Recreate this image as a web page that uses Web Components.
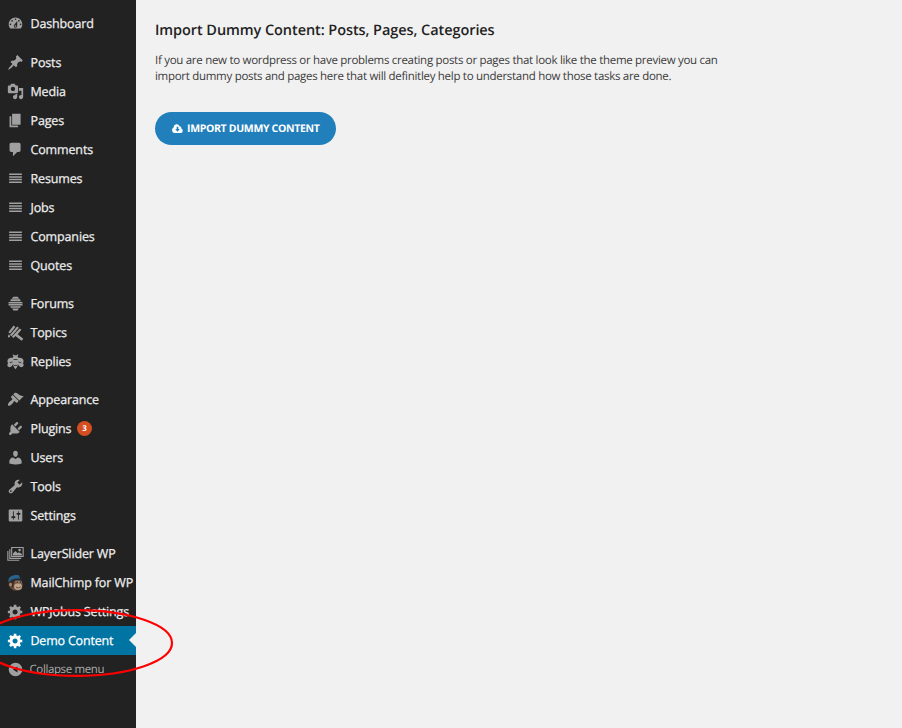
<!DOCTYPE html>
<html lang="en">
<head>
<meta charset="utf-8">
<title>Demo Content</title>
<style>
html,body{margin:0;height:100%}
body{background:#f1f1f1;font-family:"Open Sans","Noto Sans",sans-serif;overflow:hidden;text-rendering:geometricPrecision}
</style>
</head>
<body>
<admin-page>
  <admin-menu slot="menu">
    <menu-group class="first">
      <menu-item icon="dashboard">Dashboard</menu-item>
    </menu-group>
    <menu-group>
      <menu-item icon="post">Posts</menu-item>
      <menu-item icon="media">Media</menu-item>
      <menu-item icon="page">Pages</menu-item>
      <menu-item icon="comments">Comments</menu-item>
      <menu-item icon="lines">Resumes</menu-item>
      <menu-item icon="lines">Jobs</menu-item>
      <menu-item icon="lines">Companies</menu-item>
      <menu-item icon="lines">Quotes</menu-item>
    </menu-group>
    <menu-group>
      <menu-item icon="forums">Forums</menu-item>
      <menu-item icon="topics">Topics</menu-item>
      <menu-item icon="replies">Replies</menu-item>
    </menu-group>
    <menu-group>
      <menu-item icon="appearance">Appearance</menu-item>
      <menu-item icon="plugins">Plugins<count-badge slot="badge">3</count-badge></menu-item>
      <menu-item icon="users">Users</menu-item>
      <menu-item icon="tools">Tools</menu-item>
      <menu-item icon="settings">Settings</menu-item>
    </menu-group>
    <menu-group>
      <menu-item icon="slider">LayerSlider WP</menu-item>
      <menu-item icon="chimp">MailChimp for WP</menu-item>
      <menu-item icon="gear">WPJobus Settings</menu-item>
      <menu-item icon="gear" active>Demo Content</menu-item>
      <menu-item icon="collapse" quiet>Collapse menu</menu-item>
    </menu-group>
  </admin-menu>
  <import-panel>
    <span slot="title">Import Dummy Content: Posts, Pages, Categories</span>
    <span slot="line1">If you are new to wordpress or have problems creating posts or pages that look like the theme preview you can</span>
    <span slot="line2">import dummy posts and pages here that will definitley help to understand how those tasks are done.</span>
    <pill-button>IMPORT DUMMY CONTENT</pill-button>
  </import-panel>
  <ring-mark slot="overlay"></ring-mark>
</admin-page>
<script>
const p = d => `<path fill-rule="evenodd" d="${d}"/>`;
const ICONS = {
dashboard:p("M3.76 16h12.48c1.1-1.37 1.76-3.11 1.76-5 0-4.42-3.58-8-8-8s-8 3.58-8 8c0 1.89.66 3.63 1.76 5zM10 4c.55 0 1 .45 1 1s-.45 1-1 1-1-.45-1-1 .45-1 1-1zM6 6c.55 0 1 .45 1 1s-.45 1-1 1-1-.45-1-1 .45-1 1-1zm8 0c.55 0 1 .45 1 1s-.45 1-1 1-1-.45-1-1 .45-1 1-1zm-5.37 5.55L12 7v6c0 1.1-.9 2-2 2s-2-.9-2-2c0-.57.24-1.08.63-1.45zM4 10c.55 0 1 .45 1 1s-.45 1-1 1-1-.45-1-1 .45-1 1-1zm12 0c.55 0 1 .45 1 1s-.45 1-1 1-1-.45-1-1 .45-1 1-1zm-5 3c0-.55-.45-1-1-1s-1 .45-1 1 .45 1 1 1 1-.45 1-1z"),
post:p("M10.44 3.02l1.82-1.82 6.36 6.35-1.83 1.82c-1.05-.68-2.48-.57-3.41.36l-.75.75c-.92.93-1.04 2.35-.35 3.41l-1.83 1.82-2.41-2.41-2.8 2.79c-.42.42-3.38 2.71-3.8 2.29s1.86-3.39 2.28-3.81l2.79-2.79L4.1 9.36l1.83-1.82c1.05.69 2.48.57 3.4-.36l.75-.75c.93-.92 1.05-2.35.36-3.41z"),
media:p("M13 11V4c0-.55-.45-1-1-1h-1.67L9 1H5L3.67 3H2c-.55 0-1 .45-1 1v7c0 .55.45 1 1 1h10c.55 0 1-.45 1-1zM7 4.5c1.38 0 2.5 1.12 2.5 2.5S8.38 9.5 7 9.5 4.5 8.38 4.5 7 5.62 4.5 7 4.5zM14 6h5v10.5c0 1.38-1.12 2.5-2.5 2.5S14 17.88 14 16.5s1.12-2.5 2.5-2.5c.17 0 .34.02.5.05V9h-3V6zm-4 8.05V13h2v3.5c0 1.38-1.12 2.5-2.5 2.5S7 17.88 7 16.5 8.12 14 9.5 14c.17 0 .34.02.5.05z"),
page:p("M6 15V2h10v13H6zm-1 1h8v2H3V5h2v11z"),
comments:p("M5 2h9c1.1 0 2 .9 2 2v7c0 1.1-.9 2-2 2h-2l-5 5v-5H5c-1.1 0-2-.9-2-2V4c0-1.1.9-2 2-2z"),
lines:p("M2.500 4.200h15v1.700H2.500zM2.500 7.300h15v1.700H2.500zM2.500 10.400h15v1.700H2.500zM2.500 13.500h15v1.700H2.500z"),
forums:p("M7.500 2.200h5l2 2.1h-9zM4.600 5.100h10.800l.8 2.200H3.800zM1.800 8.200h16.400v1.700H1.800zM1.800 10.700h16.400v1.700H1.800zM3.800 13.200h12.400l-.8 1.900H4.600zM6 15.900h8l-1.600 2.200H7.600z"),
topics:p("M7.800 1.800l2 1.700-6.200 7.700-2-1.600zM12 2.800l2 1.700-8.600 10-2-1.700zM15 5.200l2 1.700-4.500 5.100 6.700 5.300-1.900 2.300L9.900 14l-2.200 2.600-2-1.700zM2.300 12c1.700 2 1.700 4 .1 4-1.700 0-1.700-2-.1-4z"),
replies:p("M7.300 1.500l1.200 1.200h3l1.200-1.200.8.7-1.100 1.500.9 2h1.500c3 0 4.700 1.700 4.700 4-.3 1 .1 1.500-.9 2.300 1.300 1 1.300 3 .1 4-1.500 1.200-3.700.6-4.700-1L12.700 13c.2 2.500-1 4.500-2.700 6-1.700-1.500-2.900-3.500-2.700-6L6 15c-1 1.600-3.200 2.200-4.700 1-1.200-1-1.200-3 .1-4-1-.8-.6-1.300-.9-2.300 0-2.300 1.700-4 4.700-4h1.500l.9-2-1.100-1.500zM7.700 7.300h4.600v1H7.700zM3 11.300l3.500-1.300v.9L3.500 12zM17 11.300L13.500 10v.9l3 1.100zM8.200 14h3.600v.9H8.200z"),
appearance:p("M14.480 11.060L7.410 3.990l1.500-1.500c.5-.56 2.300-.47 3.510.32 1.210.8 1.430 1.280 2.910 2.100 1.180.64 2.450 1.260 4.450.85zm-.71.71L6.700 4.700 4.930 6.470c-.39.39-.39 1.020 0 1.410l1.060 1.060c.39.39.39 1.030 0 1.420-.6.6-1.430 1.110-2.210 1.690-.35.26-.7.53-1.010.84C1.430 14.230.4 16.080 1.400 17.070c.99 1 2.840-.03 4.180-1.360.31-.31.58-.66.85-1.020.57-.78 1.080-1.610 1.690-2.210.39-.39 1.020-.39 1.410 0l1.060 1.060c.39.39 1.020.39 1.410 0z"),
plugins:p("M13.110 4.360L9.870 7.600 8 5.730l3.240-3.240c.35-.34 1.050-.2 1.560.32.52.51.66 1.210.31 1.550zm-8 1.770l.91-1.120 9.010 9.010-1.190.84c-.71.71-2.630 1.160-3.820 1.160H6.140L4.900 17.260c-.59.59-1.540.59-2.120 0-.59-.58-.59-1.530 0-2.120l1.240-1.240v-3.880c0-1.130.4-3.190 1.090-3.890zm7.260 3.970l3.240-3.240c.34-.35 1.040-.21 1.550.31.52.51.66 1.210.31 1.550l-3.240 3.250z"),
users:p("M10 9.250c-2.270 0-2.730-3.440-2.730-3.440C7 4.020 7.820 2 9.970 2c2.160 0 2.980 2.020 2.710 3.810 0 0-.41 3.440-2.680 3.440zm0 2.570L12.720 10c2.390 0 4.520 2.330 4.520 4.530v2.490s-3.650 1.130-7.240 1.130c-3.650 0-7.240-1.130-7.240-1.130v-2.490c0-2.250 1.940-4.480 4.470-4.480z"),
tools:p("M16.680 9.770c-1.340 1.340-3.300 1.670-4.950.99l-5.410 6.520c-.99.99-2.590.99-3.580 0s-.99-2.590 0-3.570l6.520-5.420c-.68-1.650-.35-3.610.99-4.950 1.280-1.280 3.120-1.620 4.720-1.060l-2.890 2.890 2.820 2.820 2.860-2.870c.53 1.580.18 3.390-1.080 4.650zM3.810 16.210c.4.39 1.040.39 1.430 0 .4-.4.4-1.040 0-1.430-.39-.4-1.030-.4-1.430 0-.39.39-.39 1.030 0 1.430z"),
settings:p("M18 16V4c0-.55-.45-1-1-1H3c-.55 0-1 .45-1 1v12c0 .55.45 1 1 1h14c.55 0 1-.45 1-1zM8 11h1c.55 0 1 .45 1 1s-.45 1-1 1H8v1.500c0 .28-.22.5-.5.5s-.5-.22-.5-.5V13H6c-.55 0-1-.45-1-1s.45-1 1-1h1V5.500c0-.28.22-.5.5-.5s.5.22.5.5V11zm5-2h-1c-.55 0-1-.45-1-1s.45-1 1-1h1V5.500c0-.28.22-.5.5-.5s.5.22.5.5V7h1c.55 0 1 .45 1 1s-.45 1-1 1h-1v5.500c0 .28-.22.5-.5.5s-.5-.22-.5-.5V9z"),
gear:p("M18 12h-2.180c-.17.7-.44 1.350-.81 1.930l1.540 1.540-2.100 2.100-1.540-1.540c-.58.36-1.230.63-1.910.79V19H8v-2.180c-.68-.16-1.330-.43-1.910-.79l-1.540 1.540-2.120-2.120 1.540-1.540c-.36-.58-.63-1.230-.79-1.910H1V9.030h2.170c.16-.7.44-1.350.8-1.940L2.430 5.550l2.100-2.100 1.540 1.540c.58-.37 1.240-.64 1.930-.81V2h3v2.180c.68.16 1.330.43 1.910.79l1.540-1.540 2.120 2.120-1.540 1.540c.36.59.64 1.240.8 1.940H18V12zm-8.500 1.500c1.660 0 3-1.340 3-3s-1.340-3-3-3-3 1.340-3 3 1.340 3 3 3z"),
slider:`<g fill="none" stroke="currentColor" stroke-width="1.300"><path d="M5.500 3h13.500v10.500H5.500z"/><path d="M3.300 5v10.700h13.500M1 7v11h13.500"/></g><path d="M7 12.300V10l3-3 2.600 2.600 1.400-1 3.500 2v1.700z"/><circle cx="14.800" cy="6" r="1.500"/>`,
chimp:`<path fill="#6b5040" d="M3 7c3-3 12-3 14 0l1.500 5-1 5.500-4 2H8l-4-3-2-4z"/><path fill="#3d2e25" d="M2.500 7l7.500-.5-2 4-1 6-3.500-2.500z"/><ellipse cx="13" cy="14.800" rx="4.600" ry="4" fill="#c0a58c"/><ellipse cx="13.500" cy="9.800" rx="3.800" ry="1.900" fill="#967a64"/><ellipse cx="4.200" cy="12.500" rx="1.800" ry="2.100" fill="#ab8268"/><path fill="#27638d" d="M1.500 8C2 3 7 .5 14 1.500l1.500 3.800C9 4.500 5 6 2 9.500z"/><path fill="#122c40" d="M5 7.500C9 4.500 14 4.500 18 7l-.5 1.200C13 6.500 9 7 5 8.500z"/><circle cx="12" cy="9.700" r=".8" fill="#222"/><circle cx="15.700" cy="9.700" r=".8" fill="#222"/><path d="M10.500 15.500q3 2.200 5.500-.3" fill="none" stroke="#5b4032"/>`,
collapse:p("M10 2a8 8 0 1 0 0 16 8 8 0 0 0 0-16zM12.300 6.500v7L7 10z")
};
const define = (name, html, setup) => {
  const t = document.createElement('template');
  t.innerHTML = html;
  customElements.define(name, class extends HTMLElement {
    constructor(){ super(); this.attachShadow({mode:'open'}).append(t.content.cloneNode(true)); }
    connectedCallback(){ if (setup) setup(this, this.shadowRoot); }
  });
};
define('admin-page', `<style>:host{display:grid;grid-template-columns:136px 1fr;height:728px;position:relative;overflow:hidden}</style>
<slot name="menu"></slot><slot></slot><slot name="overlay"></slot>`);
define('admin-menu', `<style>:host{display:flex;flex-direction:column;gap:9px;background:#222;padding-top:9px;box-sizing:border-box;min-width:0}::slotted(.first){margin-bottom:1px}</style><slot></slot>`);
define('menu-group', `<style>:host{display:flex;flex-direction:column}</style><slot></slot>`);
define('menu-item', `<style>
:host{display:flex;align-items:center;height:29px;padding-left:7px;gap:6.500px;color:#a0a0a0;position:relative;white-space:nowrap}
svg{width:17px;height:17px;flex:none;fill:currentColor}
.label{color:#eee;font-size:12.500px;font-weight:400;line-height:18px;letter-spacing:-.14px;-webkit-text-stroke:.25px currentColor;margin-top:1px}
slot[name=badge]{display:contents}
:host([active]){background:#0074a2;color:#fff}
:host([active]) .label{color:#fff;letter-spacing:-.2px}
:host([active])::after{content:"";position:absolute;right:0;top:7px;border:7px solid transparent;border-left:0;border-right-color:#f1f1f1}
:host([quiet]) .label{color:#aaa;font-size:11.500px;letter-spacing:-.38px;margin-left:-1px;-webkit-text-stroke:0}
</style><svg viewBox="0 0 20 20" aria-hidden="true"></svg><span class="label"><slot></slot></span><slot name="badge"></slot>`,
(el, r) => { r.querySelector('svg').innerHTML = ICONS[el.getAttribute('icon')]; });
define('count-badge', `<style>:host{display:flex;align-items:center;justify-content:center;width:15px;height:15px;border-radius:50%;background:#d54e21;color:#fff;font-size:8px;font-weight:700;margin-left:-1px;line-height:15px}</style><slot></slot>`);
define('import-panel', `<style>
:host{display:flex;flex-direction:column;align-items:flex-start;padding:20px 0 0 19px;white-space:nowrap}
h1{margin:0;font-size:14.500px;font-weight:600;line-height:21px;letter-spacing:-.075px;color:#222}
p{margin:12px 0 27px;font-size:11.500px;line-height:16px;letter-spacing:-.29px;color:#3c3c3c}
p slot{display:block}
</style><h1><slot name="title"></slot></h1><p><slot name="line1"></slot><slot name="line2"></slot></p><slot></slot>`);
define('pill-button', `<style>
:host{display:flex;align-items:center;gap:4px;box-sizing:border-box;width:181px;height:32.500px;padding-left:17px;border-radius:17px;background:#217fbc;color:#fff;font-size:10.500px;font-weight:700;letter-spacing:-.33px}
svg{width:11px;height:9px;flex:none}
span{margin-top:1px}
</style><svg viewBox="0 0 22 16" preserveAspectRatio="none" aria-hidden="true"><path fill="#fff" fill-rule="evenodd" d="M5 16a5 5 0 0 1-1.800-9.600A6.200 6.200 0 0 1 15 4a3.500 3.500 0 0 1 3.500 4.200A4 4 0 0 1 18 16zM9.300 5v4H6.500l4.500 4.700L15.500 9h-2.800V5z"/></svg><span><slot></slot></span>`);
define('ring-mark', `<style>:host{position:absolute;left:0;top:600px;width:180px;height:84px;pointer-events:none}svg{display:block}</style>
<svg width="180" height="84"><ellipse cx="76.500" cy="43" rx="95.500" ry="32.800" fill="none" stroke="#f00" stroke-width="2.200"/></svg>`);
</script>
</body>
</html>
